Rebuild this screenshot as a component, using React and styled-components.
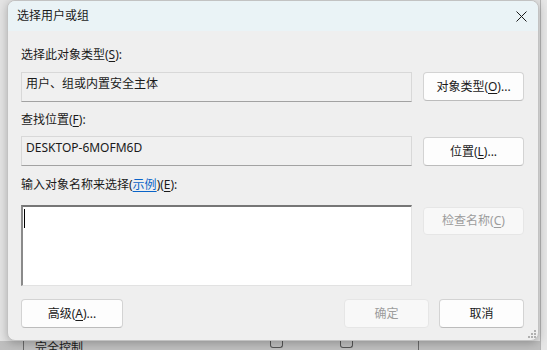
import React from 'react';
import styled, { createGlobalStyle } from 'styled-components';

const GlobalStyle = createGlobalStyle`
  html, body {
    margin: 0;
    padding: 0;
  }
  body {
    background: #e6e6e6;
    font-family: "Noto Sans", "Noto Sans CJK SC", sans-serif;
  }
`;

const Desktop = styled.div`
  position: relative;
  width: 547px;
  height: 350px;
  overflow: hidden;
  background: #e6e6e6;
`;

// the permissions dialog that sits behind the picker
const ParentDialog = styled.div`
  display: flex;
  flex-direction: column;
  width: 541px;
  height: 350px;
  border-right: 1px solid #b4b4b4;
  box-sizing: border-box;
`;

const ParentTop = styled.div`
  height: 341px;
  flex: none;
  background: #e4e4e4;
`;

const PermRow = styled.div`
  flex: 1;
  display: grid;
  grid-template-columns: 23px 235px 70px 90px 1fr;
  align-items: start;
  background: #bfbfbf;
  font-size: 12px;
  line-height: 16px;
  color: #1a1a1a;
`;

const PermCell = styled.div`
  height: 100%;
  border-left: ${p => (p.$line ? '1px solid #6a6a6a' : 'none')};
  padding-left: ${p => p.$pad || 0}px;
  box-sizing: border-box;
`;

const PermText = styled.span`
  display: block;
  margin-top: -1px;
`;

const Check = styled.div`
  width: 11px;
  height: 6px;
  border: 1px solid #555;
  border-top: none;
  border-radius: 0 0 3px 3px;
`;

const Window = styled.div`
  position: absolute;
  left: 7px;
  top: 0;
  width: 532px;
  height: 341px;
  box-sizing: border-box;
  display: flex;
  flex-direction: column;
  background: #efefef;
  border: 1px solid #c2c2c2;
  border-radius: 8px;
  overflow: hidden;
  box-shadow: 0 2px 10px rgba(0, 0, 0, 0.25);
`;

const TitleBar = styled.div`
  height: 30px;
  flex: none;
  display: flex;
  align-items: center;
  padding-left: 9px;
  background: #eaf3f6;
`;

const Title = styled.div`
  flex: 1;
  font-size: 12px;
  line-height: 16px;
  color: #1a1a1a;
`;

const CloseButton = styled.div`
  width: 34px;
  height: 30px;
  display: flex;
  align-items: center;
  justify-content: center;
`;

const Body = styled.div`
  flex: 1;
  padding: 16px 14px 0 13px;
  position: relative;
`;

const Label = styled.div`
  margin-top: ${p => p.$top || 0}px;
  font-size: 12px;
  line-height: 16px;
  color: #1a1a1a;
  white-space: nowrap;
`;

const U = styled.span`
  text-decoration: underline;
  text-underline-offset: 2px;
`;

const Link = styled.span`
  color: #0a64c8;
  text-decoration: underline;
  text-underline-offset: 2px;
`;

const Row = styled.div`
  display: grid;
  grid-template-columns: 391px 101px;
  column-gap: 11px;
  align-items: start;
  margin-top: ${p => p.$top || 0}px;
`;

const ReadField = styled.div`
  height: 30px;
  box-sizing: border-box;
  padding: 3px 4px;
  background: #f0f0f0;
  border: 1px solid #d8d8d8;
  border-bottom-color: #a2a2a2;
  font-size: 12px;
  line-height: 16px;
  color: #1a1a1a;
`;

const NameInput = styled.div`
  height: 81px;
  box-sizing: border-box;
  padding: 2px 1px;
  background: #fff;
  border-top: 2px solid #767676;
  border-left: 2px solid #8a8a8a;
  border-right: 1px solid #e2e2e2;
  border-bottom: 1px solid #e2e2e2;
`;

const Caret = styled.div`
  width: 1px;
  height: 19px;
  background: #000;
`;

const Button = styled.div`
  width: ${p => p.$w || 101}px;
  height: ${p => p.$h || 29}px;
  margin-top: ${p => p.$top || 0}px;
  box-sizing: border-box;
  display: flex;
  align-items: center;
  justify-content: center;
  background: ${p => (p.$disabled ? '#f8f8f8' : '#fdfdfd')};
  border: 1px solid ${p => (p.$disabled ? '#e6e6e6' : '#d3d3d3')};
  border-bottom-color: ${p => (p.$disabled ? '#e6e6e6' : '#bcbcbc')};
  border-radius: 4px;
  font-size: 12px;
  line-height: 16px;
  color: ${p => (p.$disabled ? '#9c9c9c' : '#1a1a1a')};
  white-space: nowrap;
`;

const Footer = styled.div`
  display: flex;
  gap: 10px;
  margin-top: 13px;
`;

const Spacer = styled.div`
  flex: 1;
`;

const Grip = styled.svg`
  position: absolute;
  right: 2px;
  bottom: 2px;
`;

export default function App() {
  return (
    <>
      <GlobalStyle />
      <Desktop>
        <ParentDialog>
          <ParentTop />
          <PermRow>
            <PermCell />
            <PermCell $line $pad={11}>
              <PermText>完全控制</PermText>
            </PermCell>
            <PermCell $pad={12}>
              <Check />
            </PermCell>
            <PermCell $pad={12}>
              <Check />
            </PermCell>
            <PermCell $line />
          </PermRow>
        </ParentDialog>

        <Window>
          <TitleBar>
            <Title>选择用户或组</Title>
            <CloseButton>
              <svg width="11" height="11" viewBox="0 0 11 11">
                <path d="M0.5 0.5L10.5 10.5M10.5 0.5L0.5 10.5" stroke="#1a1a1a" strokeWidth="1" fill="none" />
              </svg>
            </CloseButton>
          </TitleBar>

          <Body>
            <Label>
              选择此对象类型(<U>S</U>):
            </Label>
            <Row $top={9}>
              <ReadField>用户、组或内置安全主体</ReadField>
              <Button>
                对象类型(<U>O</U>)...
              </Button>
            </Row>

            <Label $top={10}>
              查找位置(<U>F</U>):
            </Label>
            <Row $top={8}>
              <ReadField>DESKTOP-6MOFM6D</ReadField>
              <Button $top={1}>
                位置(<U>L</U>)...
              </Button>
            </Row>

            <Label $top={11}>
              输入对象名称来选择(<Link>示例</Link>)(<U>E</U>):
            </Label>
            <Row $top={12}>
              <NameInput>
                <Caret />
              </NameInput>
              <Button $disabled $top={2} $h={28}>
                检查名称(<U>C</U>)
              </Button>
            </Row>

            <Footer>
              <Button $w={102}>
                高级(<U>A</U>)...
              </Button>
              <Spacer />
              <Button $w={85} $disabled>
                确定
              </Button>
              <Button $w={85}>取消</Button>
            </Footer>

            <Grip width="9" height="9" viewBox="0 0 9 9">
              <g fill="#b0b0b0">
                <rect x="7" y="1" width="2" height="2" />
                <rect x="4" y="4" width="2" height="2" />
                <rect x="7" y="4" width="2" height="2" />
                <rect x="1" y="7" width="2" height="2" />
                <rect x="4" y="7" width="2" height="2" />
                <rect x="7" y="7" width="2" height="2" />
              </g>
            </Grip>
          </Body>
        </Window>
      </Desktop>
    </>
  );
}
